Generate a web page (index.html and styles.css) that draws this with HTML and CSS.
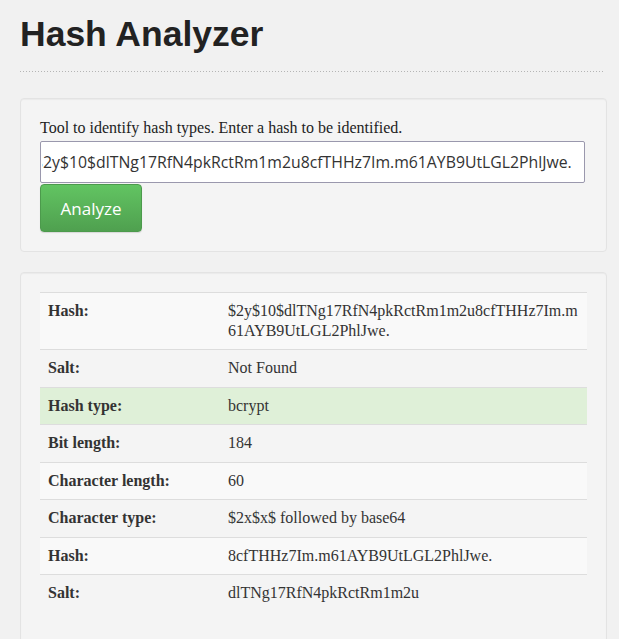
FILE: index.html
```html
<!DOCTYPE html>
<html lang="en">
<head>
<meta charset="utf-8">
<title>Hash Analyzer</title>
<link rel="stylesheet" href="styles.css">
</head>
<body>
<div class="container">
  <h1 class="page-title">Hash Analyzer</h1>
  <div class="dots"></div>

  <form class="well" onsubmit="return false;">
    <label class="intro" for="hash">Tool to identify hash types. Enter a hash to be identified.</label>
    <input id="hash" class="hash-input" type="text" value="$2y$10$dlTNg17RfN4pkRctRm1m2u8cfTHHz7Im.m61AYB9UtLGL2PhlJwe.">
    <button class="btn-success" type="submit">Analyze</button>
  </form>

  <div class="well">
    <table class="results">
      <colgroup><col class="col-label"><col></colgroup>
      <tbody>
        <tr><th>Hash:</th><td class="wrap">$2y$10$dlTNg17RfN4pkRctRm1m2u8cfTHHz7Im.m61AYB9UtLGL2PhlJwe.</td></tr>
        <tr><th>Salt:</th><td>Not Found</td></tr>
        <tr class="success"><th>Hash type:</th><td>bcrypt</td></tr>
        <tr><th>Bit length:</th><td>184</td></tr>
        <tr><th>Character length:</th><td>60</td></tr>
        <tr><th>Character type:</th><td>$2x$x$ followed by base64</td></tr>
        <tr><th>Hash:</th><td>8cfTHHz7Im.m61AYB9UtLGL2PhlJwe.</td></tr>
        <tr><th>Salt:</th><td>dlTNg17RfN4pkRctRm1m2u</td></tr>
      </tbody>
    </table>
  </div>
</div>
<script src="script.js"></script>
</body>
</html>
```

FILE: styles.css
```css
html, body {
  margin: 0;
  padding: 0;
}

body {
  background-color: #f1f1f1;
  color: #333;
  font-family: "Liberation Serif", "Times New Roman", serif;
  font-size: 16px;
}

.container {
  padding: 0 12px 0 20px;
}

.page-title {
  margin: 16px 0 0;
  font-family: "Liberation Sans", Arial, sans-serif;
  font-size: 35.5px;
  line-height: 37px;
  font-weight: bold;
  color: #222;
}

.dots {
  height: 1px;
  margin: 18px 2px 26px 0;
  background-image: repeating-linear-gradient(to right, #b5b5b5 0, #b5b5b5 1px, transparent 1px, transparent 3px);
}

.well {
  display: block;
  margin: 0 0 20px;
  padding: 19px;
  background-color: #f4f4f4;
  border: 1px solid #e3e3e3;
  border-radius: 4px;
  box-shadow: inset 0 1px 1px rgba(0, 0, 0, 0.04);
}

.intro {
  display: block;
  line-height: 20px;
  margin: 0 0 3px;
  color: #222;
}

.hash-input {
  display: block;
  box-sizing: border-box;
  width: 545px;
  height: 42px;
  margin: 0;
  padding: 0 12px 0 1px;
  border: 1px solid #9a98ad;
  border-radius: 2px;
  background: #fff;
  font-family: "Open Sans", sans-serif;
  font-size: 15.8px;
  color: #333;
  outline: none;
}

.btn-success {
  display: block;
  box-sizing: border-box;
  width: 102px;
  height: 48px;
  margin: 1px 0 0;
  padding: 0;
  border: 1px solid #4c9a4c;
  border-radius: 4px;
  background-image: linear-gradient(to bottom, #62c462, #4fa04f);
  box-shadow: 0 1px 1px rgba(0, 0, 0, 0.12);
  color: #fff;
  font-family: "Open Sans", sans-serif;
  font-size: 17px;
  cursor: pointer;
}

.results {
  width: 100%;
  margin-bottom: 20px;
  table-layout: fixed;
  border-collapse: collapse;
  border-spacing: 0;
}

.col-label {
  width: 180px;
}

.results th,
.results td {
  padding: 8px;
  line-height: 20.5px;
  text-align: left;
  vertical-align: top;
  border-top: 1px solid #dddddd;
  color: #333;
}

.results th {
  font-weight: bold;
}

.results tr:nth-child(odd) {
  background-color: #f9f9f9;
}

.results tr.success {
  background-color: #dff0d8;
}

.results td.wrap {
  word-break: break-all;
  line-height: 20px;
}
```

FILE: script.js
```js
var input = document.getElementById('hash');
input.scrollLeft = input.scrollWidth;
```
